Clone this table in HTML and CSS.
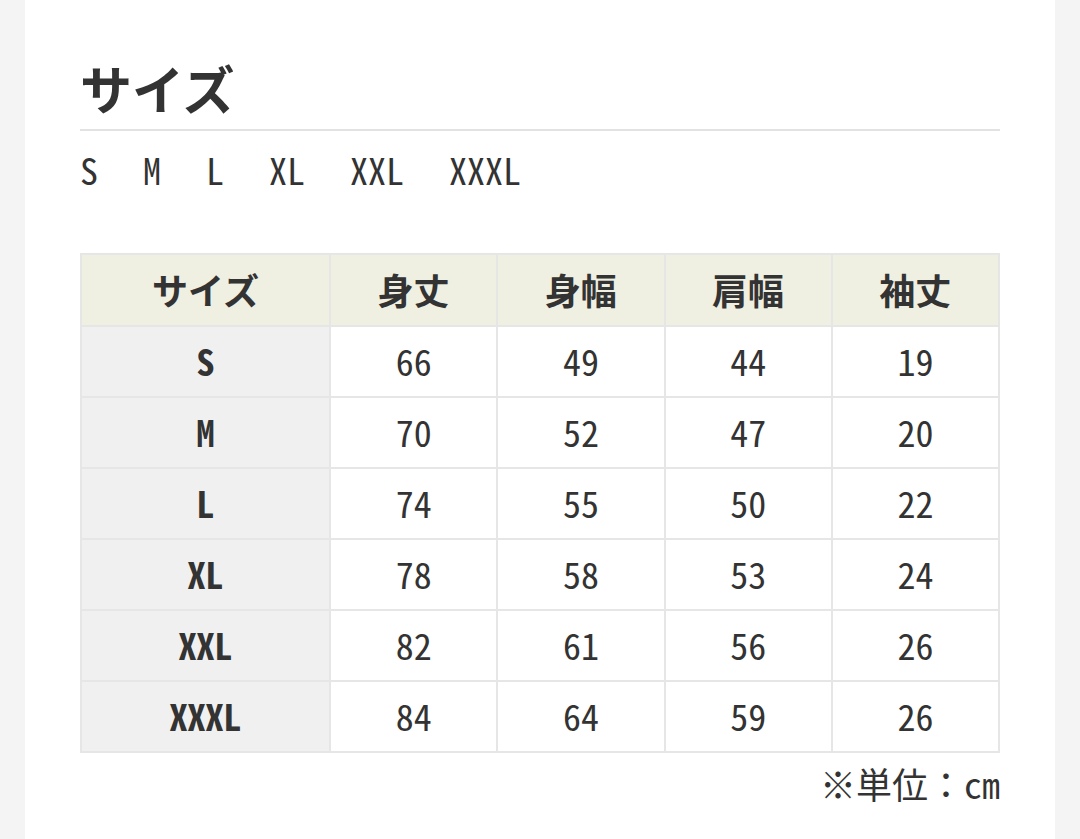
FILE: index.html
```html
<!DOCTYPE html>
<html lang="ja">
<head>
<meta charset="utf-8">
<title>サイズ</title>
<link rel="stylesheet" href="styles.css">
</head>
<body>
<main class="card">
  <h2 class="title">サイズ</h2>
  <div class="size-list">
    <span>S</span><span>M</span><span>L</span><span>XL</span><span>XXL</span><span>XXXL</span>
  </div>
  <table class="size-table">
    <colgroup>
      <col class="c-first"><col class="c-val"><col class="c-val"><col class="c-val"><col class="c-val">
    </colgroup>
    <thead>
      <tr><th>サイズ</th><th>身丈</th><th>身幅</th><th>肩幅</th><th>袖丈</th></tr>
    </thead>
    <tbody>
      <tr><th>S</th><td>66</td><td>49</td><td>44</td><td>19</td></tr>
      <tr><th>M</th><td>70</td><td>52</td><td>47</td><td>20</td></tr>
      <tr><th>L</th><td>74</td><td>55</td><td>50</td><td>22</td></tr>
      <tr><th>XL</th><td>78</td><td>58</td><td>53</td><td>24</td></tr>
      <tr><th>XXL</th><td>82</td><td>61</td><td>56</td><td>26</td></tr>
      <tr><th>XXXL</th><td>84</td><td>64</td><td>59</td><td>26</td></tr>
    </tbody>
  </table>
  <p class="note">※単位：cm</p>
</main>
</body>
</html>
```

FILE: styles.css
```css
html, body {
  margin: 0;
  padding: 0;
}
body {
  background: #f4f4f4;
  font-family: "Noto Sans Mono CJK JP", "Noto Sans CJK JP", sans-serif;
  color: #333;
}
.card {
  background: #fff;
  margin: 0 25px;
  padding: 62px 55px 20px;
  min-height: 839px;
  box-sizing: border-box;
}
.title {
  margin: 0;
  font-family: "Noto Sans CJK JP", sans-serif;
  font-size: 52px;
  line-height: 52px;
  font-weight: 700;
  padding-bottom: 15px;
  border-bottom: 2px solid #e2e2e2;
}
.size-list {
  display: flex;
  gap: 45px;
  font-size: 36px;
  line-height: 40px;
  margin-top: 18px;
}
.size-table {
  margin-top: 64px;
  width: 920px;
  border-collapse: collapse;
  table-layout: fixed;
  font-size: 36px;
}
.c-first { width: 249px; }
.size-table th,
.size-table td {
  border: 2px solid #e6e6e6;
  text-align: center;
  height: 66px;
  padding: 0 0 3px;
  line-height: 40px;
}
.size-table thead th {
  background: #efefe2;
  font-family: "Noto Sans CJK JP", sans-serif;
  font-weight: 700;
  height: 67px;
}
.size-table tbody th {
  background: #f0f0f0;
  font-weight: 700;
}
.size-table td {
  background: #fff;
  font-weight: 400;
}
.note {
  margin: 10px 0 0;
  text-align: right;
  font-size: 36px;
  line-height: 40px;
}
```
